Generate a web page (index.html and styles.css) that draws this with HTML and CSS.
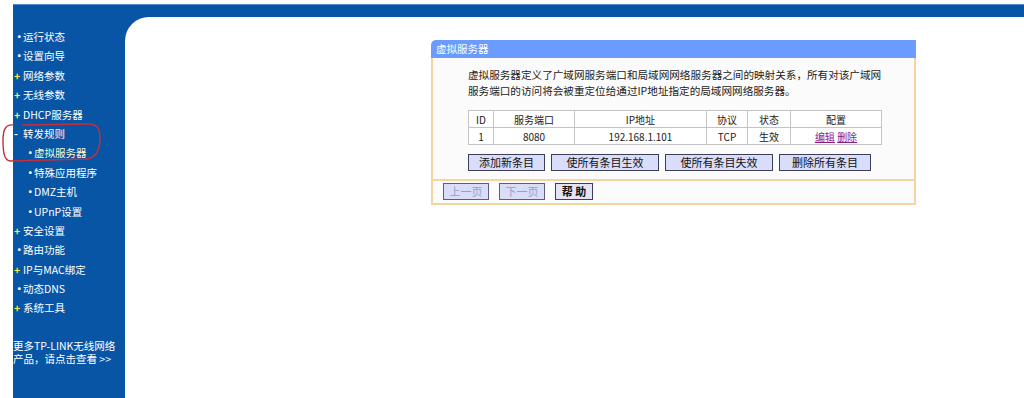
FILE: index.html
```html
<!DOCTYPE html>
<html>
<head>
	<meta charset="utf-8">
	<title>虚拟服务器</title>
	<link rel="stylesheet" href="styles.css">
</head>
<body>
	<div class="frame">
		<div class="topbar"></div>
		<div class="layout">
			<div class="sidebar">
				<ul class="menu">
					<li><span class="dot">•</span>运行状态</li>
					<li><span class="dot">•</span>设置向导</li>
					<li><span class="plus">+</span>网络参数</li>
					<li><span class="plus">+</span>无线参数</li>
					<li><span class="plus">+</span>DHCP服务器</li>
					<li><span class="dot">-</span>转发规则</li>
					<li class="sub active"><span class="dot">•</span>虚拟服务器</li>
					<li class="sub"><span class="dot">•</span>特殊应用程序</li>
					<li class="sub"><span class="dot">•</span>DMZ主机</li>
					<li class="sub"><span class="dot">•</span>UPnP设置</li>
					<li><span class="plus">+</span>安全设置</li>
					<li><span class="dot">•</span>路由功能</li>
					<li><span class="plus">+</span>IP与MAC绑定</li>
					<li><span class="dot">•</span>动态DNS</li>
					<li><span class="plus">+</span>系统工具</li>
				</ul>
				<p class="more">更多TP-LINK无线网络<br>产品，请点击查看 &gt;&gt;</p>
			</div>
			<div class="main">
				<div class="panel">
					<div class="panel-title">虚拟服务器</div>
					<div class="panel-body">
						<p class="desc">虚拟服务器定义了广域网服务端口和局域网网络服务器之间的映射关系，所有对该广域网<br>服务端口的访问将会被重定位给通过IP地址指定的局域网网络服务器。</p>
						<table class="list">
							<tr>
								<th class="c-id">ID</th>
								<th class="c-port">服务端口</th>
								<th class="c-ip">IP地址</th>
								<th class="c-proto">协议</th>
								<th class="c-state">状态</th>
								<th class="c-conf">配置</th>
							</tr>
							<tr>
								<td>1</td>
								<td>8080</td>
								<td>192.168.1.101</td>
								<td>TCP</td>
								<td>生效</td>
								<td><a href="#">编辑</a> <a href="#">删除</a></td>
							</tr>
						</table>
						<div class="actions">
							<button class="btn w1">添加新条目</button>
							<button class="btn w2">使所有条目生效</button>
							<button class="btn w3">使所有条目失效</button>
							<button class="btn w4">删除所有条目</button>
						</div>
					</div>
					<div class="panel-foot">
						<button class="btn small" disabled>上一页</button>
						<button class="btn small" disabled>下一页</button>
						<button class="btn help">帮 助</button>
					</div>
				</div>
			</div>
		</div>
	</div>
	<svg class="mark" width="110" height="50" viewBox="0 0 110 50">
		<path d="M14 5 C6 4 3 9 3 20 C3 32 4 40 10 41 L86 39 C96 38 100 30 100 18 C100 8 97 4 88 4 L22 5" fill="none" stroke="#c4303e" stroke-width="1.4"/>
	</svg>
</body>
</html>
```

FILE: styles.css
```css
*{margin: 0; padding: 0;}
body{
	background: #fff;
	font-family: "Noto Sans CJK SC", sans-serif;
	font-size: 10.5px;
	color: #222;
	position: relative;
	height: 398px;
	overflow: hidden;
}
.frame{
	margin: 4px 0 0 13px;
	height: 394px;
	background: #0855a6;
	display: flex;
	flex-direction: column;
}
.topbar{
	height: 13px;
	border-top: 1px solid #4d8bcc;
	box-sizing: border-box;
}
.layout{
	flex: 1;
	display: flex;
}
.sidebar{
	width: 112px;
	color: #fff;
}
.menu{
	list-style: none;
	padding-top: 10px;
}
.menu li{
	height: 19.4px;
	line-height: 19.4px;
	padding-left: 1px;
	white-space: nowrap;
}
.menu li.sub{
	padding-left: 12px;
}
.menu li.active{
	color: #fffbd0;
}
.dot, .plus{
	display: inline-block;
	width: 9px;
	font-weight: bold;
}
.plus{
	color: #ffe94a;
}
.more{
	margin-top: 21px;
	line-height: 13px;
	white-space: nowrap;
	font-size: 10.5px;
}
.main{
	flex: 1;
	background: #fff;
	border-top-left-radius: 24px;
	padding: 23px 0 0 306px;
}
.panel{
	width: 485px;
}
.panel-title{
	height: 18px;
	line-height: 18px;
	background: #6b9bfd;
	color: #fff;
	padding-left: 5px;
	border-top-left-radius: 5px;
}
.panel-body{
	background: #fbfbfb;
	border-left: 2px solid #f5d4a4;
	border-right: 2px solid #f5d4a4;
	padding: 9px 0 8px 35px;
}
.desc{
	line-height: 16px;
	color: #222;
	font-size: 10.6px;
	white-space: nowrap;
}
.list{
	margin: 11px 0 0 0;
	border-collapse: collapse;
	background: #fff;
	border: 1px solid #b8b8b8;
	font-size: 10px;
}
.list th, .list td{
	border: 1px solid #c4c4c4;
	height: 16px;
	line-height: 15px;
	text-align: center;
	font-weight: normal;
	padding: 0;
}
.c-id{ width: 24px;}
.c-port{ width: 80px;}
.c-ip{ width: 131px;}
.c-proto{ width: 40px;}
.c-state{ width: 42px;}
.c-conf{ width: 90px;}
.list a{
	color: #8a1a8a;
}
.actions{
	margin-top: 9px;
	display: flex;
	gap: 6px;
}
.btn{
	height: 17px;
	line-height: 15px;
	background: #d9ddfa;
	border: 1px solid #3c3e5c;
	font-family: "Noto Sans CJK SC", sans-serif;
	font-size: 11px;
	color: #111;
	padding: 0;
}
.w1{ width: 77px;}
.w2{ width: 108px;}
.w3{ width: 108px;}
.w4{ width: 92px;}
.panel-foot{
	background: #fbfbfb;
	border: 2px solid #f5d4a4;
	padding: 2px 0 3px 10px;
	display: flex;
	gap: 10px;
}
.btn.small{
	width: 46px;
	color: #9aa0bb;
	border-color: #5a5e80;
}
.btn.help{
	width: 38px;
	font-weight: bold;
	background: #e3e5f7;
}
.mark{
	position: absolute;
	left: 0;
	top: 120px;
}
```
